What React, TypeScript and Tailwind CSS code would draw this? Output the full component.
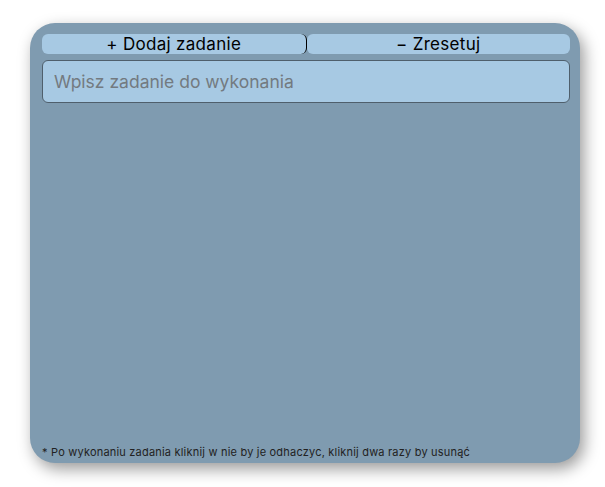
import React from "react";

export default function App() {
  return (
    <div className="w-[605px] h-[487px] bg-white pt-[23px] pl-[30px]" style={{ fontFamily: "Inter, 'Open Sans', sans-serif" }}>
      <div className="w-[550px] h-[440px] rounded-[25px] bg-[#7f9bb0] shadow-[4px_6px_16px_rgba(0,0,0,0.4)] flex flex-col pt-[11px] pl-[12px] pr-[10px] pb-[2px]">
        <div className="flex h-[20px]">
          <button className="flex-1 h-full bg-[#a7c9e3] rounded-[6px] border-r border-black text-[17px] leading-[20px] text-black tracking-[0.3px]">
            + Dodaj zadanie
          </button>
          <button className="flex-1 h-full bg-[#a7c9e3] rounded-[6px] text-[17px] leading-[20px] text-black tracking-[0.3px]">
            − Zresetuj
          </button>
        </div>
        <input
          className="mt-[6px] h-[43px] w-full rounded-[6px] border border-[#4f5f6c] bg-[#a7c9e3] px-[11px] text-[17.5px] text-black placeholder:text-[#737a80] outline-none"
          placeholder="Wpisz zadanie do wykonania"
        />
        <div className="flex-1" />
        <p className="text-[11px] leading-[14px] text-[#222] pb-[2px] tracking-[0.2px]">
          * Po wykonaniu zadania kliknij w nie by je odhaczyc, kliknij dwa razy by usunąć
        </p>
      </div>
    </div>
  );
}
